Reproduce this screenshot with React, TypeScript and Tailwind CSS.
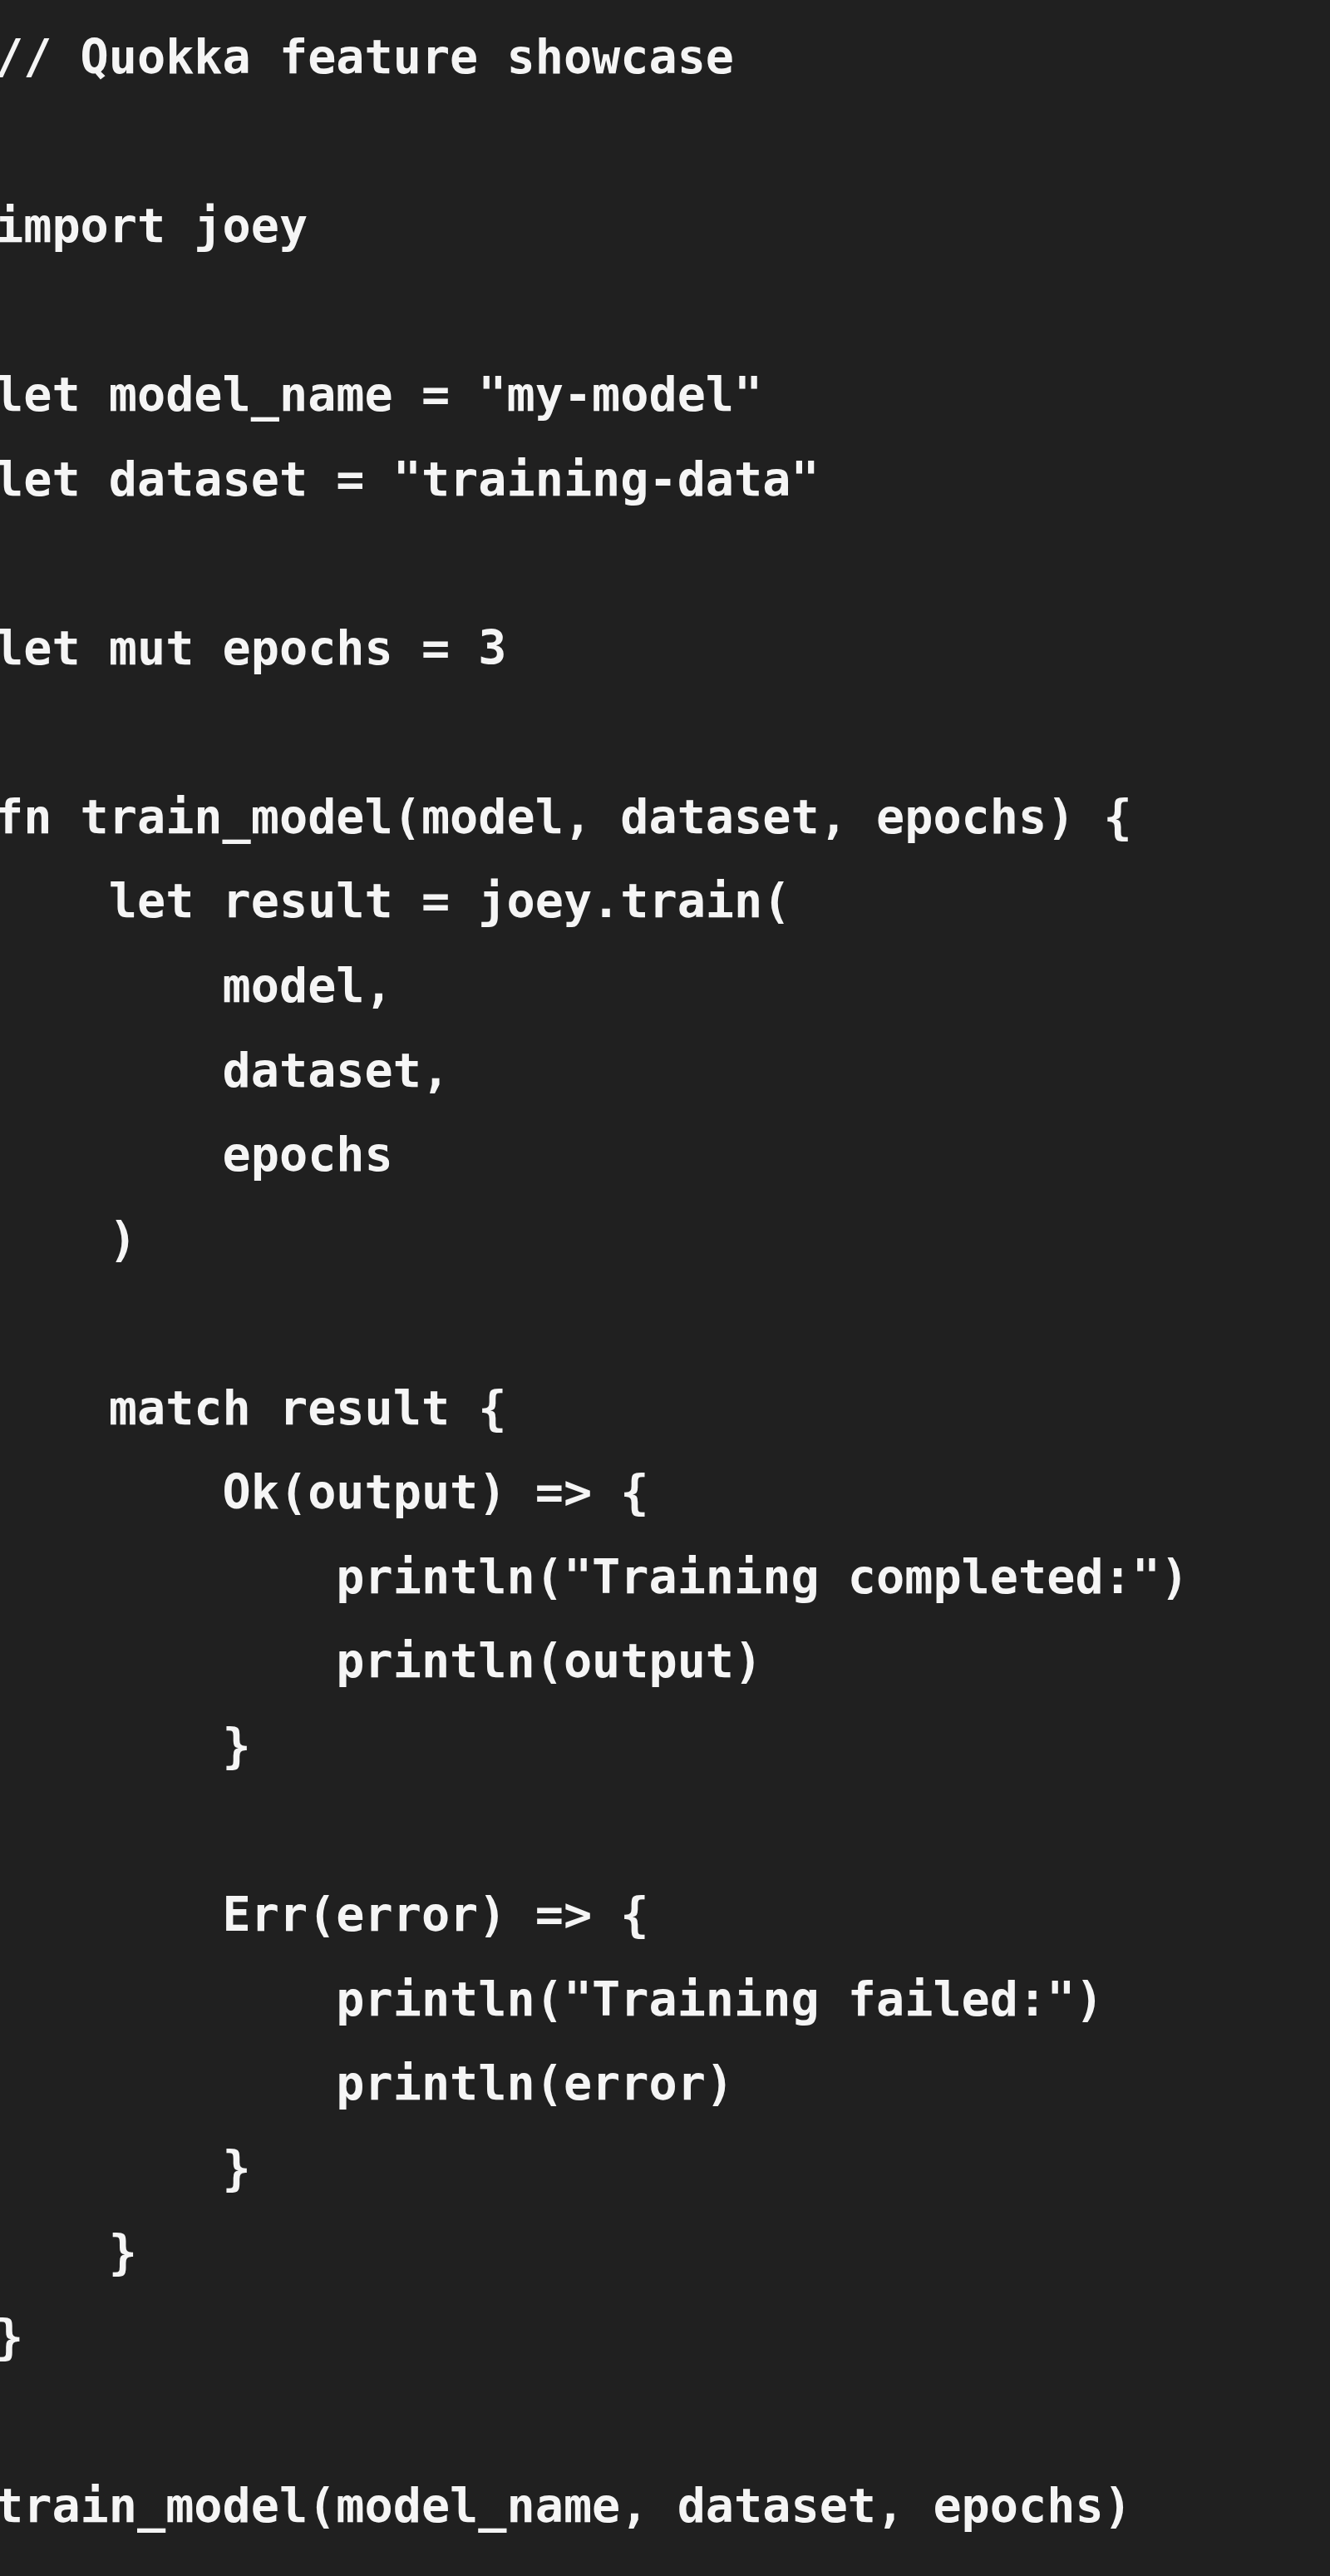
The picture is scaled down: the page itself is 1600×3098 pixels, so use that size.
const lines: string[] = [
  "// Quokka feature showcase",
  "",
  "import joey",
  "",
  'let model_name = "my-model"',
  'let dataset = "training-data"',
  "",
  "let mut epochs = 3",
  "",
  "fn train_model(model, dataset, epochs) {",
  "    let result = joey.train(",
  "        model,",
  "        dataset,",
  "        epochs",
  "    )",
  "",
  "    match result {",
  "        Ok(output) => {",
  '            println("Training completed:")',
  "            println(output)",
  "        }",
  "",
  "        Err(error) => {",
  '            println("Training failed:")',
  "            println(error)",
  "        }",
  "    }",
  "}",
  "",
  "train_model(model_name, dataset, epochs)",
];

export default function App() {
  return (
    <div className="min-h-screen w-full overflow-hidden bg-[#202020]">
      <pre
        className="m-0 -ml-[6px] pt-[18px] text-[56.8px] font-bold leading-[101.55px] text-[#f5f5f5] whitespace-pre"
        style={{ fontFamily: '"DejaVu Sans Mono", "Liberation Mono", monospace' }}
      >
        {lines.map((l, i) => (
          <div key={i} className="h-[101.55px]">
            {l === "" ? "\u00a0" : l}
          </div>
        ))}
      </pre>
    </div>
  );
}
